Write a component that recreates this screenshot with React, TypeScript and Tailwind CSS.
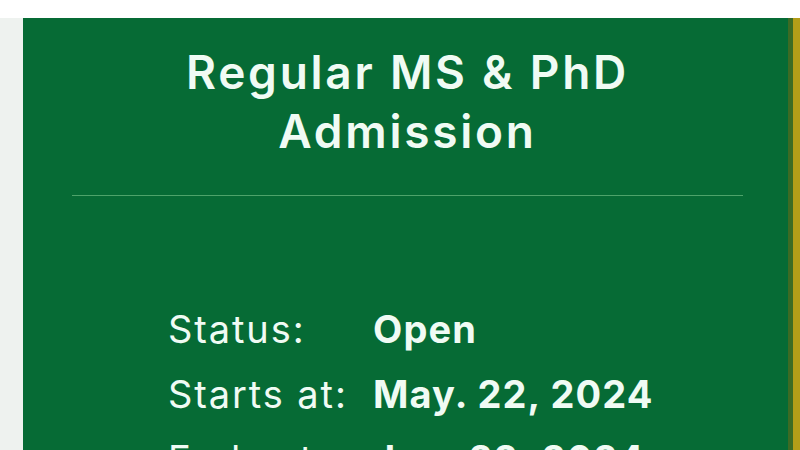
const rows = [
  { label: "Status:", value: "Open" },
  { label: "Starts at:", value: "May. 22, 2024" },
  { label: "Ends at:", value: "Jun. 22, 2024" },
];

export default function App() {
  return (
    <div className="h-[450px] w-[800px] overflow-hidden bg-white font-['Inter',sans-serif]">
      <div className="h-[18px] bg-white" />
      <div className="flex h-[432px]">
        <div className="w-[23px] bg-[#eef2ef]" />
        <div className="flex-1 bg-[#066b35] pl-[49px] pr-[45px] pt-[25px] text-[#f0fbf4]">
          <h2 className="text-center text-[46px] font-semibold leading-[59px] tracking-[0.06em]">
            Regular MS &amp; PhD
            <br />
            Admission
          </h2>
          <div className="mt-[34px] h-px bg-[#4ea36a]" />
          <div className="ml-[96px] mt-[101px] grid grid-cols-[205px_auto] text-[38px] leading-[65px] tracking-[0.05em]">
            {rows.map((r) => (
              <div key={r.label} className="contents">
                <span>{r.label}</span>
                <span className="font-bold tracking-[0.03em]">{r.value}</span>
              </div>
            ))}
          </div>
        </div>
        <div className="w-[5px] bg-[#3d6b24]" />
        <div className="w-[7px] bg-[#b49d18]" />
      </div>
    </div>
  );
}
